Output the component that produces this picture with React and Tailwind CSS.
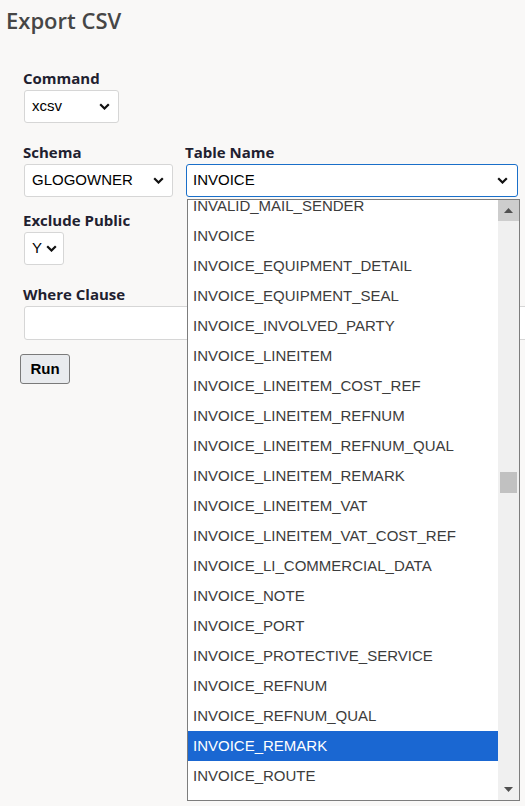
const TABLES = [
  'INVALID_MAIL_SENDER',
  'INVOICE',
  'INVOICE_EQUIPMENT_DETAIL',
  'INVOICE_EQUIPMENT_SEAL',
  'INVOICE_INVOLVED_PARTY',
  'INVOICE_LINEITEM',
  'INVOICE_LINEITEM_COST_REF',
  'INVOICE_LINEITEM_REFNUM',
  'INVOICE_LINEITEM_REFNUM_QUAL',
  'INVOICE_LINEITEM_REMARK',
  'INVOICE_LINEITEM_VAT',
  'INVOICE_LINEITEM_VAT_COST_REF',
  'INVOICE_LI_COMMERCIAL_DATA',
  'INVOICE_NOTE',
  'INVOICE_PORT',
  'INVOICE_PROTECTIVE_SERVICE',
  'INVOICE_REFNUM',
  'INVOICE_REFNUM_QUAL',
  'INVOICE_REMARK',
  'INVOICE_ROUTE',
  'INVOICE_SERVICE_CODE',
];

const label = "block text-[15px] leading-5 font-bold text-[#1f2130] [font-family:'Open_Sans',sans-serif]";

function Chevron() {
  return (
    <svg width="11" height="7" viewBox="0 0 11 7" className="shrink-0">
      <polyline points="1.2,1.2 5.5,5.5 9.8,1.2" fill="none" stroke="#111" strokeWidth="2.2" />
    </svg>
  );
}

function FakeSelect({ value, className = '' }) {
  return (
    <div
      className={`flex h-[33px] items-center justify-between rounded-[3px] border bg-white text-[15px] text-black [font-family:'Liberation_Sans',Arial,sans-serif] ${className}`}
    >
      <span>{value}</span>
      <Chevron />
    </div>
  );
}

export default function App() {
  return (
    <div className="relative h-[806px] w-full overflow-hidden bg-[#f9f8f7]">
      <h1 className="pl-[6px] pt-[4px] text-[22px] leading-8 font-semibold text-[#464646] [font-family:'Open_Sans',sans-serif]">
        Export CSV
      </h1>

      <div className="pl-[23px] pt-[32px]">
        {/* Command */}
        <div>
          <span className={label}>Command</span>
          <FakeSelect value="xcsv" className="mt-[2px] ml-[1px] w-[95px] border-[#d6d6d6] pl-[7px] pr-[8px]" />
        </div>

        {/* Schema / Table name */}
        <div className="mt-[19px] flex gap-[12px]">
          <div>
            <span className={label}>Schema</span>
            <FakeSelect value="GLOGOWNER" className="mt-[2px] ml-[1px] w-[149px] border-[#d6d6d6] pl-[7px] pr-[8px]" />
          </div>
          <div>
            <span className={label}>Table Name</span>
            <FakeSelect value="INVOICE" className="mt-[2px] ml-[1px] w-[332px] border-[#1a6fc9] pl-[6px] pr-[9px]" />
          </div>
        </div>

        {/* Exclude public */}
        <div className="mt-[13px] flex gap-[121px]">
          <div>
            <span className={label}>Exclude Public</span>
            <FakeSelect value="Y" className="mt-[2px] ml-[1px] w-[40px] border-[#d6d6d6] pl-[7px] pr-[6px]" />
          </div>
          <div>
            <span className={label}>Use Headers</span>
          </div>
        </div>

        {/* Where clause */}
        <div className="mt-[19px]">
          <span className={label}>Where Clause</span>
          <div className="mt-[2px] ml-[1px] h-[34px] w-[520px] rounded-[3px] border border-[#d6d6d6] bg-white" />
        </div>

        <button className="mt-[14px] -ml-[3px] h-[30px] w-[50px] rounded-[3px] border border-[#7a7a7a] bg-[#e9ebee] text-[15px] font-bold text-black [font-family:'Liberation_Sans',Arial,sans-serif]">
          Run
        </button>
      </div>

      {/* Open dropdown list for Table Name */}
      <div className="absolute left-[187px] top-[199px] flex h-[602px] w-[333px] overflow-hidden border border-[#7d7d7d] bg-white">
        <div className="relative flex-1 overflow-hidden">
          <div className="-mt-[9px]">
            {TABLES.map((t) => (
              <div
                key={t}
                className={`h-[30px] pl-[5px] text-[15px] leading-[30px] [font-family:'Liberation_Sans',Arial,sans-serif] ${
                  t === 'INVOICE_REMARK' ? 'bg-[#1a67d2] text-white' : 'text-[#3c3c3c]'
                }`}
              >
                {t}
              </div>
            ))}
          </div>
        </div>
        {/* scrollbar */}
        <div className="relative w-[21px] bg-[#f0f0f0]">
          <div className="flex h-[21px] items-center justify-center bg-[#cdcdcd]">
            <svg width="9" height="5" viewBox="0 0 9 5">
              <polygon points="0,5 4.5,0 9,5" fill="#505050" />
            </svg>
          </div>
          <div className="absolute left-[2px] top-[272px] h-[21px] w-[17px] bg-[#c1c1c1]" />
          <div className="absolute bottom-0 flex h-[21px] w-full items-center justify-center">
            <svg width="9" height="5" viewBox="0 0 9 5">
              <polygon points="0,0 9,0 4.5,5" fill="#505050" />
            </svg>
          </div>
        </div>
      </div>
    </div>
  );
}
